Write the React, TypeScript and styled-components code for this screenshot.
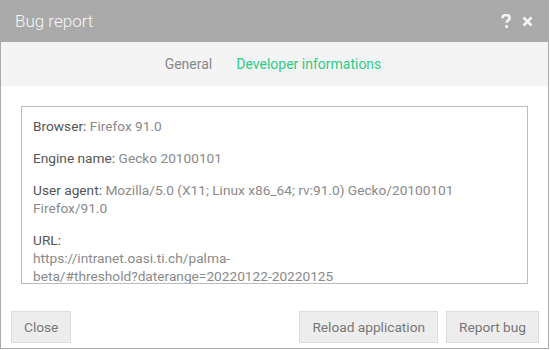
import React, { useState } from 'react'
import styled, { createGlobalStyle } from 'styled-components'

const GlobalStyle = createGlobalStyle`
    html, body {
        margin: 0;
        padding: 0;
        background: #ffffff;
    }
    body {
        font-family: Roboto, "Liberation Sans", sans-serif;
    }
`

const Dialog = styled.div`
    width: 549px;
    height: 349px;
    box-sizing: border-box;
    border: 1px solid #aaaaaa;
    border-top: none;
    display: flex;
    flex-direction: column;
    background: #ffffff;
`

const Header = styled.div`
    height: 42px;
    margin: 0 -1px;
    background: #aaaaaa;
    display: flex;
    align-items: center;
    justify-content: space-between;
    padding: 0 16px 0 15px;
`

const Title = styled.div`
    color: #f6f6f6;
    font-size: 17px;
    font-weight: 300;
`

const HeaderIcons = styled.div`
    display: flex;
    align-items: center;
    gap: 11px;
`

const Tabs = styled.div`
    height: 44px;
    background: #f4f4f4;
    display: flex;
    align-items: center;
    justify-content: center;
    gap: 24px;
    padding-right: 3px;
`

const Tab = styled.div<{ $active?: boolean }>`
    font-size: 14px;
    color: ${p => (p.$active ? '#2ecc87' : '#888888')};
    cursor: pointer;
`

const Body = styled.div`
    padding: 20px 20px 0 20px;
`

const InfoBox = styled.div`
    height: 178px;
    box-sizing: border-box;
    border: 1px solid #bbbbbb;
    padding: 10px 11px 0 11px;
    overflow: hidden;
    font-size: 13.7px;
    line-height: 18px;
    color: #8a8a8a;
`

const InfoItem = styled.p`
    margin: 0 0 14px 0;
`

const Label = styled.span`
    color: #555555;
`

const Footer = styled.div`
    margin-top: auto;
    display: flex;
    align-items: center;
    gap: 8px;
    padding: 0 9px 5px 10px;
`

const Spacer = styled.div`
    flex: 1;
`

const Button = styled.button`
    height: 32px;
    padding: 0 12px;
    background: #eeeded;
    border: 1px solid #dddddd;
    color: #777777;
    font-family: Roboto, "Liberation Sans", sans-serif;
    font-size: 13.7px;
    cursor: pointer;
`

const QuestionIcon = () => (
    <svg width="10" height="15" viewBox="0 0 10 15">
        <path d="M1.5 4.2 C1.5 2 3 1 5 1 C7.2 1 8.6 2.2 8.6 4 C8.6 6.2 5.6 6.4 5.6 8.8" fill="none" stroke="#f4f4f4" strokeWidth="2.6" />
        <rect x="4.2" y="11.2" width="2.8" height="2.8" fill="#f4f4f4" />
    </svg>
)

const CloseIcon = () => (
    <svg width="11" height="11" viewBox="0 0 11 11">
        <path d="M1.5 1.5 L9.5 9.5 M9.5 1.5 L1.5 9.5" stroke="#f4f4f4" strokeWidth="2.6" />
    </svg>
)

const info = [
    { label: 'Browser', value: 'Firefox 91.0' },
    { label: 'Engine name', value: 'Gecko 20100101' },
    { label: 'User agent', value: 'Mozilla/5.0 (X11; Linux x86_64; rv:91.0) Gecko/20100101 Firefox/91.0' },
]

const App: React.FC = () => {
    const [tab, setTab] = useState('dev')

    return (
        <>
            <GlobalStyle />
            <Dialog>
                <Header>
                    <Title>Bug report</Title>
                    <HeaderIcons>
                        <QuestionIcon />
                        <CloseIcon />
                    </HeaderIcons>
                </Header>
                <Tabs>
                    <Tab $active={tab === 'general'} onClick={() => setTab('general')}>General</Tab>
                    <Tab $active={tab === 'dev'} onClick={() => setTab('dev')}>Developer informations</Tab>
                </Tabs>
                <Body>
                    <InfoBox>
                        {info.map(item => (
                            <InfoItem key={item.label}>
                                <Label>{item.label}:</Label> {item.value}
                            </InfoItem>
                        ))}
                        <InfoItem>
                            <Label>URL:</Label>
                            <br />
                            https://intranet.oasi.ti.ch/palma-
                            <br />
                            beta/#threshold?daterange=20220122-20220125
                        </InfoItem>
                    </InfoBox>
                </Body>
                <Footer>
                    <Button>Close</Button>
                    <Spacer />
                    <Button>Reload application</Button>
                    <Button>Report bug</Button>
                </Footer>
            </Dialog>
        </>
    )
}

export default App
